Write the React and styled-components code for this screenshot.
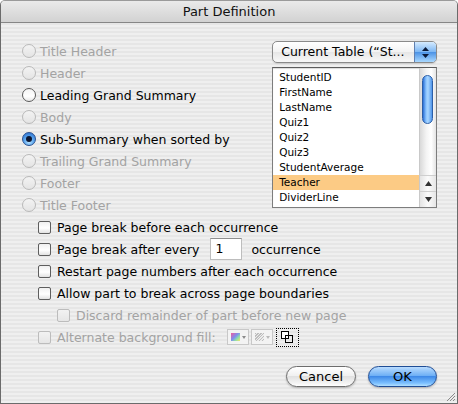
import React from 'react';
import styled, {createGlobalStyle, css} from 'styled-components';

const GlobalStyle = createGlobalStyle`
    html, body {
        margin: 0;
        padding: 0;
        width: 458px;
        height: 404px;
        overflow: hidden;
    }
    body {
        font-family: "DejaVu Sans", "Noto Sans", sans-serif;
        -webkit-font-smoothing: antialiased;
    }
`;

const Window = styled.div`
    box-sizing: border-box;
    width: 458px;
    height: 404px;
    border: 1px solid #6b6b6b;
    border-top-color: #9a9a9a;
    border-radius: 5px 5px 0 0;
    overflow: hidden;
    display: flex;
    flex-direction: column;
    background: repeating-linear-gradient(
        to bottom,
        #efefef 0px,
        #efefef 2px,
        #e6e6e6 2px,
        #e6e6e6 4px
    );
    position: relative;
`;

const TitleBar = styled.div`
    height: 21px;
    flex: none;
    border-bottom: 1px solid #868686;
    background: linear-gradient(#eaeaea, #d2d2d2);
    display: flex;
    align-items: center;
    justify-content: center;
    font-size: 13px;
    color: #111;
`;

const Content = styled.div`
    flex: 1;
    display: flex;
    flex-direction: column;
    padding: 17px 20px 0 21px;
`;

const TopSection = styled.div`
    display: flex;
`;

const RadioColumn = styled.div`
    width: 252px;
    display: flex;
    flex-direction: column;
`;

const OptionRow = styled.label`
    height: 22px;
    display: flex;
    align-items: center;
    font-size: 12.5px;
    white-space: nowrap;
    color: ${({disabled}) => (disabled ? '#a3a3a3' : '#000')};
    padding-left: ${({indent}) => indent || 0}px;
`;

const RadioDot = styled.span`
    box-sizing: border-box;
    width: 14px;
    height: 14px;
    border-radius: 50%;
    margin-right: 4px;
    flex: none;
    border: 1px solid ${({disabled}) => (disabled ? '#b9b9b9' : '#5a5a5a')};
    background: ${({disabled}) =>
        disabled ? 'linear-gradient(#f3f3f3, #e4e4e4)' : 'linear-gradient(#f4f4f4, #ffffff 60%, #e8e8e8)'};
    position: relative;
    ${({checked}) =>
        checked &&
        css`
            border-color: #284f8f;
            background: radial-gradient(circle at 50% 75%, #b7e2ff 0%, #5aa6ef 45%, #2566c7 100%);
            &::after {
                content: '';
                position: absolute;
                left: 3px;
                top: 3px;
                width: 6px;
                height: 6px;
                border-radius: 50%;
                background: #0b1530;
            }
        `}
`;

const CheckBox = styled.span`
    box-sizing: border-box;
    width: 13px;
    height: 13px;
    border-radius: 2px;
    margin-right: 6px;
    flex: none;
    border: 1px solid ${({disabled}) => (disabled ? '#bcbcbc' : '#5e5e5e')};
    background: ${({disabled}) =>
        disabled ? 'linear-gradient(#f2f2f2, #e6e6e6)' : 'linear-gradient(#f0f0f0, #ffffff 55%, #e2e2e2)'};
`;

const RightColumn = styled.div`
    width: 166px;
    display: flex;
    flex-direction: column;
    gap: 4px;
    margin-top: 1px;
`;

const PopupButton = styled.div`
    box-sizing: border-box;
    height: 22px;
    border: 1px solid #8a8a8a;
    border-radius: 5px;
    display: flex;
    overflow: hidden;
    background: linear-gradient(#ffffff, #f2f2f2 50%, #e6e6e6 51%, #f8f8f8);
    box-shadow: 0 1px 1px rgba(0, 0, 0, 0.12);
`;

const PopupLabel = styled.span`
    flex: 1;
    font-size: 12.5px;
    line-height: 20px;
    padding-left: 8px;
    color: #000;
    white-space: nowrap;
`;

const PopupArrows = styled.span`
    width: 21px;
    border-left: 1px solid #5f7fb0;
    background: linear-gradient(#d5ebff, #7cb6f3 50%, #4b92e6 51%, #a9d8ff);
    display: flex;
    align-items: center;
    justify-content: center;
`;

const ListBox = styled.div`
    box-sizing: border-box;
    height: 141px;
    border: 1px solid #7d7d7d;
    border-top-color: #5c5c5c;
    background: #fff;
    display: flex;
    box-shadow: inset 0 1px 1px rgba(0, 0, 0, 0.15);
`;

const ListItems = styled.div`
    flex: 1;
    padding-top: 2px;
`;

const ListItem = styled.div`
    height: 15px;
    line-height: 15px;
    font-size: 10.5px;
    padding-left: 6px;
    color: #000;
    white-space: nowrap;
    background: ${({selected}) => (selected ? '#fccb85' : 'transparent')};
`;

const ScrollBar = styled.div`
    width: 16px;
    flex: none;
    display: flex;
    flex-direction: column;
    border-left: 1px solid #c9c9c9;
    background: linear-gradient(to right, #d9d9d9, #f4f4f4 40%, #ffffff 70%, #e4e4e4);
`;

const ScrollTrack = styled.div`
    flex: 1;
    padding: 7px 2px 0 2px;
`;

const ScrollThumb = styled.div`
    width: 11px;
    height: 49px;
    border-radius: 6px;
    border: 1px solid #2c5fa8;
    box-sizing: border-box;
    background: linear-gradient(to right, #2a6fd6, #8cc5ff 35%, #a9d6ff 55%, #4f95ea);
`;

const ScrollArrow = styled.div`
    height: 15px;
    display: flex;
    align-items: center;
    justify-content: center;
    border-top: 1px solid #cfcfcf;
    background: linear-gradient(to right, #e4e4e4, #fbfbfb 50%, #e6e6e6);
`;

const CheckSection = styled.div`
    display: flex;
    flex-direction: column;
    padding-left: 16px;
`;

const NumberInput = styled.span`
    box-sizing: border-box;
    width: 32px;
    height: 22px;
    margin: 0 9px 0 11px;
    background: #fff;
    border: 1px solid #bdbdbd;
    border-top-color: #8f8f8f;
    font-size: 12.5px;
    line-height: 20px;
    padding-left: 4px;
    color: #000;
`;

const FillWell = styled.span`
    box-sizing: border-box;
    width: 22px;
    height: 16px;
    margin-left: ${({first}) => (first ? 11 : 2)}px;
    border: 1px solid #c8c8c8;
    background: #f3f3f3;
    display: flex;
    align-items: center;
    padding-left: 3px;
    gap: 2px;
`;

const Swatch = styled.span`
    width: 9px;
    height: 8px;
    background: ${({pattern}) =>
        pattern
            ? 'repeating-linear-gradient(135deg, #bdbdbd 0 1px, #ececec 1px 2px)'
            : 'linear-gradient(135deg, #f25a9a, #7d8ef0 45%, #8fe0a8 70%, #f7e36a)'};
`;

const MiniArrow = styled.span`
    width: 0;
    height: 0;
    border-left: 2px solid transparent;
    border-right: 2px solid transparent;
    border-top: 3px solid ${({dim}) => (dim ? '#b9b9b9' : '#8b8b8b')};
`;

const FocusWell = styled.span`
    box-sizing: border-box;
    width: 23px;
    height: 19px;
    margin-left: 3px;
    border: 1px dotted #000;
    display: flex;
    align-items: center;
    justify-content: center;
`;

const ButtonRow = styled.div`
    margin-top: auto;
    margin-bottom: 16px;
    display: flex;
    justify-content: flex-end;
    gap: 12px;
`;

const AquaButton = styled.button`
    box-sizing: border-box;
    width: ${({wide}) => wide}px;
    height: 21px;
    border-radius: 11px;
    font-family: "DejaVu Sans", "Noto Sans", sans-serif;
    font-size: 13px;
    color: #000;
    padding: 0;
    border: 1px solid ${({primary}) => (primary ? '#1f4d96' : '#6d6d6d')};
    background: ${({primary}) =>
        primary
            ? 'linear-gradient(#b9dcff, #6fb0f5 45%, #3f8ae8 50%, #7cc0ff 85%, #b2e0ff)'
            : 'linear-gradient(#ffffff, #f1f1f1 45%, #e1e1e1 50%, #f4f4f4 85%, #ffffff)'};
    box-shadow: 0 1px 2px rgba(0, 0, 0, 0.25);
`;

const GrowBox = styled.svg`
    position: absolute;
    right: 1px;
    bottom: 1px;
`;

const radioOptions = [
    {label: 'Title Header', disabled: true},
    {label: 'Header', disabled: true},
    {label: 'Leading Grand Summary'},
    {label: 'Body', disabled: true},
    {label: 'Sub-Summary when sorted by', checked: true},
    {label: 'Trailing Grand Summary', disabled: true},
    {label: 'Footer', disabled: true},
    {label: 'Title Footer', disabled: true}
];

const fields = [
    'StudentID',
    'FirstName',
    'LastName',
    'Quiz1',
    'Quiz2',
    'Quiz3',
    'StudentAverage',
    'Teacher',
    'DividerLine'
];

const Radio = ({label, disabled, checked}) => (
    <OptionRow disabled={disabled}>
        <RadioDot disabled={disabled} checked={checked} />
        {label}
    </OptionRow>
);

const Check = ({children, disabled, indent}) => (
    <OptionRow disabled={disabled} indent={indent}>
        <CheckBox disabled={disabled} />
        {children}
    </OptionRow>
);

const App = () => {
    return (
        <>
            <GlobalStyle />
            <Window>
                <TitleBar>Part Definition</TitleBar>
                <Content>
                    <TopSection>
                        <RadioColumn>
                            {radioOptions.map(option => (
                                <Radio key={option.label} {...option} />
                            ))}
                        </RadioColumn>
                        <RightColumn>
                            <PopupButton>
                                <PopupLabel>Current Table (“St...</PopupLabel>
                                <PopupArrows>
                                    <svg width="7" height="11" viewBox="0 0 7 11">
                                        <path d="M3.5 0 L7 4 L0 4 Z M3.5 11 L7 7 L0 7 Z" fill="#0a1a3a" />
                                    </svg>
                                </PopupArrows>
                            </PopupButton>
                            <ListBox>
                                <ListItems>
                                    {fields.map(field => (
                                        <ListItem key={field} selected={field === 'Teacher'}>
                                            {field}
                                        </ListItem>
                                    ))}
                                </ListItems>
                                <ScrollBar>
                                    <ScrollTrack>
                                        <ScrollThumb />
                                    </ScrollTrack>
                                    <ScrollArrow>
                                        <svg width="7" height="5" viewBox="0 0 7 5">
                                            <path d="M3.5 0 L7 5 L0 5 Z" fill="#333" />
                                        </svg>
                                    </ScrollArrow>
                                    <ScrollArrow>
                                        <svg width="7" height="5" viewBox="0 0 7 5">
                                            <path d="M0 0 L7 0 L3.5 5 Z" fill="#333" />
                                        </svg>
                                    </ScrollArrow>
                                </ScrollBar>
                            </ListBox>
                        </RightColumn>
                    </TopSection>
                    <CheckSection>
                        <Check>Page break before each occurrence</Check>
                        <Check>
                            Page break after every
                            <NumberInput>1</NumberInput>
                            occurrence
                        </Check>
                        <Check>Restart page numbers after each occurrence</Check>
                        <Check>Allow part to break across page boundaries</Check>
                        <Check disabled indent={19}>
                            Discard remainder of part before new page
                        </Check>
                        <Check disabled>
                            Alternate background fill:
                            <FillWell first>
                                <Swatch />
                                <MiniArrow />
                            </FillWell>
                            <FillWell>
                                <Swatch pattern />
                                <MiniArrow dim />
                            </FillWell>
                            <FocusWell>
                                <svg width="12" height="12" viewBox="0 0 12 12">
                                    <rect x="0.5" y="0.5" width="7" height="7" fill="#fff" stroke="#000" />
                                    <rect x="4.5" y="4.5" width="7" height="7" fill="none" stroke="#000" />
                                </svg>
                            </FocusWell>
                        </Check>
                    </CheckSection>
                    <ButtonRow>
                        <AquaButton wide={70}>Cancel</AquaButton>
                        <AquaButton wide={69} primary>
                            OK
                        </AquaButton>
                    </ButtonRow>
                </Content>
                <GrowBox width="12" height="12" viewBox="0 0 12 12">
                    <path d="M11 3 L3 11 M11 6 L6 11 M11 9 L9 11" stroke="#8a8a8a" strokeWidth="1" />
                </GrowBox>
            </Window>
        </>
    );
};

export default App;
